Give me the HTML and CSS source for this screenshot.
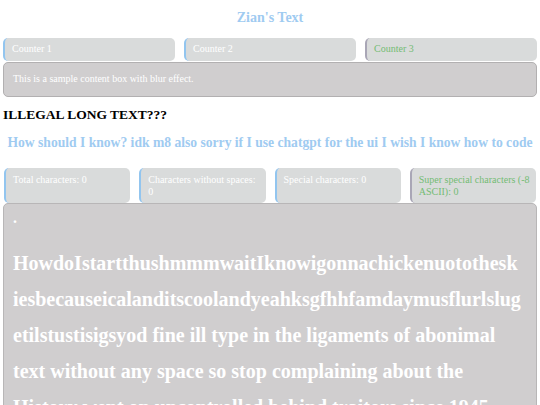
FILE: index.html
```html
<!DOCTYPE html>
<html>
<head>
<meta charset="utf-8">
<link rel="stylesheet" href="styles.css">
</head>
<body>
<div class="page">
  <h1 class="title">Zian's Text</h1>
  <div class="counters">
    <div class="box">Counter 1</div>
    <div class="box">Counter 2</div>
    <div class="box special">Counter 3</div>
  </div>
  <div class="content">This is a sample content box with blur effect.</div>
  <h2 class="illegal">ILLEGAL LONG TEXT???</h2>
  <p class="sub">How should I know? idk m8 also sorry if I use chatgpt for the ui I wish I know how to code</p>
  <div class="stats">
    <div class="box stat">Total characters: 0</div>
    <div class="box stat">Characters without spaces: 0</div>
    <div class="box stat">Special characters: 0</div>
    <div class="box stat special">Super special characters (-8 ASCII): 0</div>
  </div>
  <div class="bigbox">
    <p class="dot">.</p>
    <p class="bigtext">HowdoIstartthushmmmwaitIknowigonnachickenuotothesk<br>iesbecauseicalanditscoolandyeahksgfhhfamdaymusflurlslug<br>etilstustisigsyod fine ill type in the ligaments of abonimal text without any space so stop complaining about the History went on uncontrolled behind traitors since 1945</p>
  </div>
</div>
</body>
</html>
```
FILE: styles.css
```css
html, body {
  margin: 0;
  padding: 0;
  background: #ffffff;
}
body {
  font-family: "Liberation Serif", "Times New Roman", serif;
}
.page {
  padding: 0 3px;
}
.title {
  margin: 0;
  padding-top: 10px;
  height: 38px;
  box-sizing: border-box;
  text-align: center;
  font-size: 14px;
  line-height: 16px;
  color: #9fcbf1;
}
.counters {
  display: flex;
  gap: 9px;
}
.box {
  flex: 1;
  background: #d9dbdb;
  border-left: 2px solid #92c5ef;
  border-radius: 5px;
  color: #ffffff;
  font-size: 10px;
  line-height: 12px;
  padding: 5px 6px 4px 7px;
  box-sizing: border-box;
}
.counters .box {
  height: 23px;
}
.box.special {
  border-left-color: #a9a6b6;
  color: #74bc74;
}
.content {
  background: #d0cecf;
  border: 1px solid #b2b0b1;
  border-radius: 5px;
  color: #ffffff;
  font-size: 10px;
  line-height: 12px;
  padding: 10px 9px 10px;
  height: 35px;
  box-sizing: border-box;
  margin-top: 1px;
}
.illegal {
  margin: 10px 0 0;
  font-size: 13.5px;
  line-height: 16px;
  color: #000000;
}
.sub {
  margin: 11.5px 0 0;
  text-align: center;
  font-weight: bold;
  font-size: 13.6px;
  line-height: 16px;
  color: #9fcbf1;
}
.stats {
  display: flex;
  gap: 9px;
  margin-top: 17.5px;
  padding: 0 1px;
}
.stats .box {
  height: 35px;
  padding: 6px 6px 4px 7px;
}
.bigbox {
  background: #d0cecf;
  border: 1px solid #b8b6b7;
  border-radius: 5px;
  padding: 4.6px 14px 10px 9px;
  color: #ffffff;
  height: 260px;
  box-sizing: border-box;
  overflow: hidden;
}
.dot {
  margin: 0;
  font-size: 16px;
  line-height: 18px;
  font-weight: bold;
}
.bigtext {
  margin: 18.6px 0 0;
  font-size: 20px;
  line-height: 36px;
  font-weight: bold;
}
```
